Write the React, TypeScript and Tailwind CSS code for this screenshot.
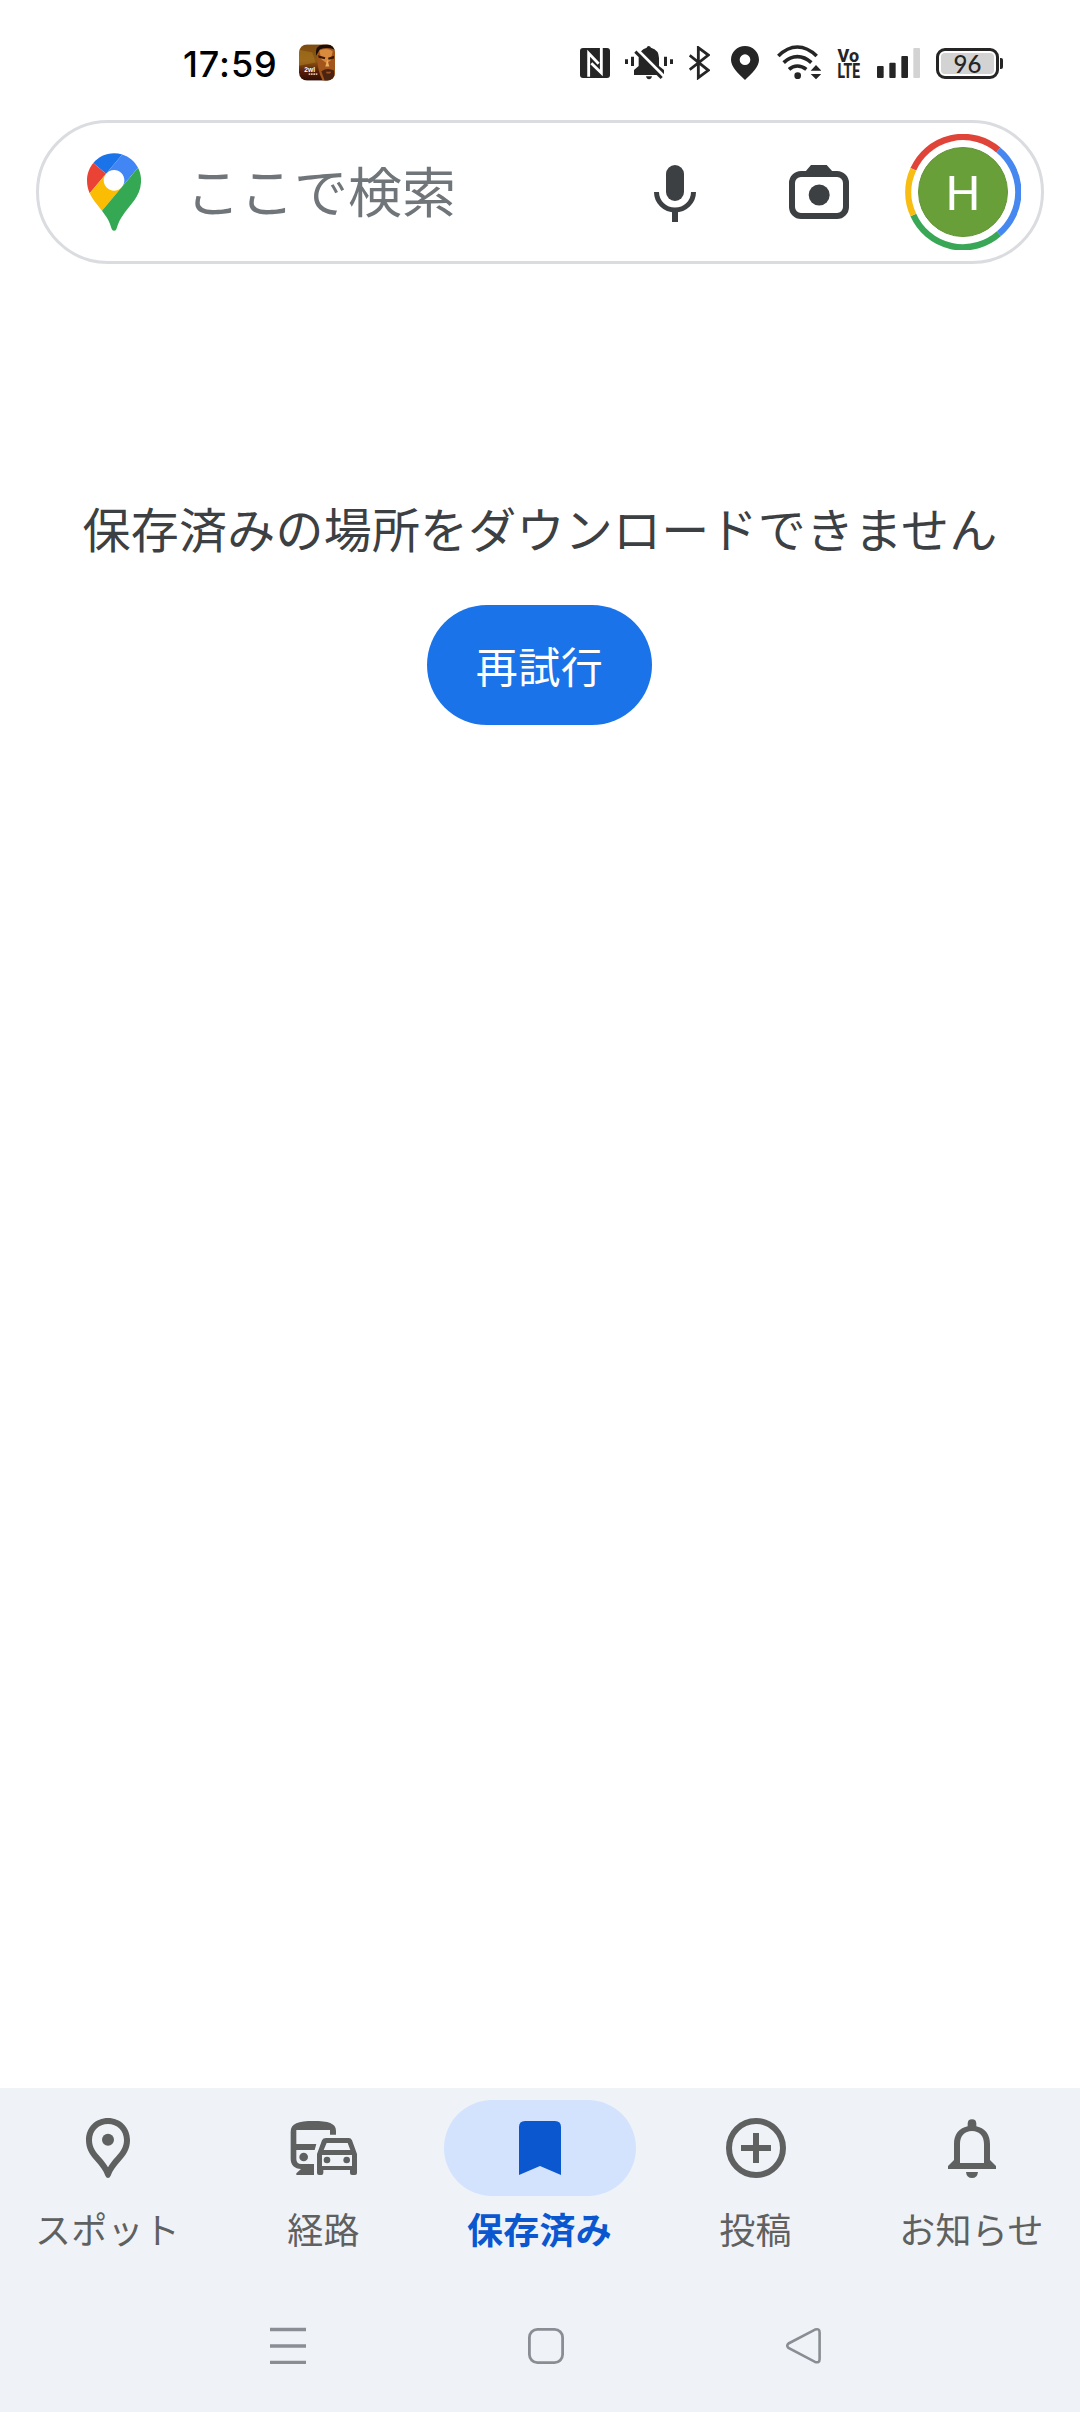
import React from "react";

const INK = "#252525";

function StatusBar() {
  return (
    <div className="flex h-[120px] items-start pt-[42px]">
      <div className="ml-[183px] flex h-[44px] w-[96px] items-center whitespace-nowrap font-['Inter'] text-[36px] leading-none font-[450] text-black">
        <span className="tracking-[0.9px]">17:59</span>
      </div>
      {/* running app thumbnail */}
      <svg className="mt-[2px] ml-[20px] h-[37px] w-[36px]" viewBox="417 43 108 110">
        <defs>
          <linearGradient id="bg" x1="0" y1="0" x2="0" y2="1">
            <stop offset="0" stopColor="#7d4a10" />
            <stop offset="0.45" stopColor="#8f5a14" />
            <stop offset="0.75" stopColor="#571c08" />
            <stop offset="1" stopColor="#2e0d05" />
          </linearGradient>
          <clipPath id="app"><rect x="417" y="44" width="108" height="108" rx="24" /></clipPath>
        </defs>
        <g clipPath="url(#app)">
          <rect x="417" y="43" width="108" height="110" fill="url(#bg)" />
          <path d="M417 60l40 8 10 30-50 10z" fill="#a87420" opacity=".6" />
          <path d="M470 60Q474 46 500 44H525V153H488Q470 120 470 60z" fill="#a3561c" />
          <path d="M478 62Q500 52 518 64L512 92 500 100 484 88z" fill="#d98a3c" />
          <path d="M468 78Q464 46 490 44H525V60Q505 50 480 58z" fill="#1c0e06" />
          <path d="M474 76l22 6-2 6-18-4zM504 84l18-6v8l-16 4z" fill="#3a1806" />
          <path d="M502 90l6 20h-12z" fill="#f0ae60" />
          <path d="M484 124Q502 112 522 122V153H494z" fill="#4a2410" />
          <path d="M498 126h16l-4 5h-10z" fill="#a0502a" />
          <text x="433" y="126" fill="#fff" fontFamily="Liberation Sans" fontWeight="700" fontSize="20">2wl</text>
          <path d="M446 133h26" stroke="#d9b8a0" strokeWidth="5" strokeDasharray="5 2" />
        </g>
      </svg>
      {/* NFC */}
      <svg className="mt-[4px] ml-[245px] h-[34px] w-[30px]" viewBox="60 48 90 102">
        <rect x="60" y="54" width="90" height="90" rx="9" fill={INK} />
        <path d="M86 140V70L116 101" fill="none" stroke="#fff" strokeWidth="8.500" />
        <path d="M124 54V129L94 100" fill="none" stroke="#fff" strokeWidth="8.500" />
      </svg>
      {/* vibrate, sound off */}
      <svg className="mt-[4px] ml-[15px] h-[34px] w-[48px]" viewBox="195 48 144 102" fill={INK}>
        <path d="M195 88h9v14h-9zM213 80h9v28h-9zM312 80h9v28h-9zM330 88h9v14h-9z" />
        <path d="M260 53Q261 48 266 48T273 53Q297 60 297 84V108L312 120V135H222V120L236 108V84Q237 60 260 53z" />
        <path d="M258 139h18q-2 9-9 9t-9-9z" />
        <path d="M233 60L312 139" stroke="#fff" strokeWidth="9" />
        <path d="M226 65L305 144" stroke={INK} strokeWidth="9" />
      </svg>
      {/* Bluetooth */}
      <svg className="mt-[4px] ml-[16px] h-[34px] w-[21px]" viewBox="387 48 63 102" fill="none" stroke={INK} strokeWidth="8.500">
        <path d="M389 76L445 121L415 143V53L445 75L389 119" />
      </svg>
      {/* location */}
      <svg className="mt-[4px] ml-[21px] h-[34px] w-[28px]" viewBox="513 48 84 102" fill={INK}>
        <path fillRule="evenodd" d="M555 48C532 48 513 66 513 89C513 110 532 127 555 150C578 127 597 110 597 89C597 66 578 48 555 48zM555 73a16 16 0 1 1 0 32a16 16 0 1 1 0-32z" />
      </svg>
      {/* Wi-Fi */}
      <svg className="mt-[3px] ml-[18px] h-[35px] w-[44px]" viewBox="51 44 132 105" fill="none" stroke={INK} strokeWidth="11">
        <path d="M55 77Q82 50 112 50T170 77M71 97Q90 79 112 79T154 97M87 117Q98 107 112 107T139 117" />
        <circle cx="113" cy="136" r="10" fill={INK} stroke="none" />
        <path d="M152 121L168 104L184 121zM152 131H184L168 147z" fill={INK} stroke="none" />
      </svg>
      {/* VoLTE */}
      <svg className="mt-[4px] ml-[16px] h-[34px] w-[24px]" viewBox="0 0 24 34" fill={INK} fontFamily="Roboto" fontWeight="800">
        <text x="0.500" y="15.500" fontSize="19" textLength="21.500" lengthAdjust="spacingAndGlyphs">Vo</text>
        <text x="0.500" y="32" fontSize="19.500" textLength="22.500" lengthAdjust="spacingAndGlyphs">LTE</text>
      </svg>
      {/* signal strength */}
      <svg className="mt-[4px] ml-[16px] h-[34px] w-[43px]" viewBox="351 48 129 102" fill={INK}>
        <rect x="351" y="108" width="20" height="36" rx="3" />
        <rect x="388" y="98" width="19" height="46" rx="3" />
        <rect x="424" y="78" width="20" height="66" rx="3" />
        <rect x="460" y="54" width="20" height="90" rx="3" fill="#d3d3d3" />
      </svg>
      {/* battery */}
      <div className="mt-[6px] ml-[16px] flex items-center">
        <div className="flex h-[31px] w-[63px] rounded-[9px] border-[3px] border-[#252525] p-[2px]">
          <div className="flex flex-1 items-center justify-center rounded-[4px] bg-[#d3d3d3] font-['Lato'] text-[24px] leading-none font-medium text-[#252525]">96</div>
        </div>
        <div className="ml-[1px] h-[11px] w-[3px] rounded-r-[2px] bg-[#252525]" />
      </div>
    </div>
  );
}

function SearchBar() {
  return (
    <div className="mx-[36px] flex h-[144px] items-center rounded-full border-[3px] border-[#dadce0] bg-white">
      <svg className="ml-[48px] h-[78px] w-[54px]" viewBox="0 0 92.3 132.3">
        <path fill="#1a73e8" d="M60.2 2.2C55.8.8 51 0 46.1 0 32 0 19.3 6.4 10.8 16.5l21.8 18.3L60.2 2.2z" />
        <path fill="#ea4335" d="M10.8 16.5C4.1 24.5 0 34.9 0 46.1c0 8.7 1.7 15.7 4.6 22l28-33.3-21.8-18.3z" />
        <path fill="#4285f4" d="M46.2 28.5c9.8 0 17.7 7.9 17.7 17.7 0 4.3-1.6 8.3-4.2 11.4 0 0 13.9-16.6 27.5-32.7-5.6-10.8-15.3-19-27-22.7L32.6 34.8c3.3-3.8 8.1-6.3 13.6-6.3" />
        <path fill="#fbbc04" d="M46.2 63.8c-9.8 0-17.7-7.9-17.7-17.7 0-4.3 1.5-8.3 4.1-11.3l-28 33.3c4.8 10.6 12.8 19.2 21 29.9l34.1-40.5c-3.3 3.9-8.1 6.3-13.5 6.3" />
        <path fill="#34a853" d="M59.1 109.2c15.4-24.1 33.3-35 33.3-63 0-7.7-1.9-14.9-5.2-21.3L25.6 98c2.6 3.4 5.3 7.3 7.9 11.3 9.4 14.5 6.8 23.1 12.8 23.1s3.4-8.7 12.8-23.2" />
      </svg>
      <div className="mb-[5px] ml-[45px] w-[453px] text-[54px] leading-[72px] whitespace-nowrap text-[#70757a]">ここで検索</div>
      <svg className="h-[72px] w-[72px]" viewBox="57 138 216 216" fill="#3c4043">
        <rect x="138" y="165" width="54" height="108" rx="27" />
        <path d="M109.500 246A55.500 54 0 0 0 220.500 246" fill="none" stroke="#3c4043" strokeWidth="15" />
        <path d="M156 300h18v36h-18z" />
      </svg>
      <svg className="ml-[72px] h-[72px] w-[72px]" viewBox="489 138 216 216" fill="#3c4043">
        <path d="M557 184L573 165H620L637 184z" />
        <rect x="516" y="192" width="162" height="126" rx="27" fill="none" stroke="#3c4043" strokeWidth="18" />
        <circle cx="597.500" cy="255" r="31.500" />
      </svg>
      <div className="ml-[50px] grid h-[116px] w-[116px] place-items-center">
        <svg className="col-start-1 row-start-1 h-[116px] w-[116px]" viewBox="855 72 348 348" fill="none" strokeWidth="19">
          <path d="M880 178A163 163 0 0 1 1135 120" stroke="#e04438" />
          <path d="M1135 120A163 163 0 0 1 1137 371" stroke="#4788f0" />
          <path d="M1137 371A163 163 0 0 1 880 315" stroke="#3aa757" />
          <path d="M880 315A163 163 0 0 1 880 178" stroke="#f7bd13" />
        </svg>
        <div className="col-start-1 row-start-1 flex h-[90px] w-[90px] items-center justify-center rounded-full border border-[#639437] bg-[#689f38] pt-[2px] font-['Roboto'] text-[49px] leading-none text-white">H</div>
      </div>
    </div>
  );
}

const GREY = "#5f6060";

function PlaceIcon() {
  return (
    <svg className="h-[72px] w-[72px]" viewBox="216 126 216 216">
      <path fill={GREY} fillRule="evenodd" d="M324 144C287 144 258 172 258 210C258 238 270 254 286 272C301 289 311 301 316 317Q319 324 324 324T332 317C337 301 347 289 362 272C378 254 390 238 390 210C390 172 361 144 324 144zM324 162C351 162 372 182 372 210C372 231 362 245 348 260C337 272 330 281 324 292C318 281 311 272 300 260C286 245 276 231 276 210C276 182 297 162 324 162z" />
      <circle cx="324" cy="209.500" r="18" fill={GREY} />
    </svg>
  );
}

function CommuteIcon() {
  return (
    <svg className="h-[72px] w-[72px]" viewBox="864 126 216 216" fill={GREY}>
      <path fillRule="evenodd" d="M872 186C872 160 895 153 940 153S1008 160 1008 182V194H990V180H889V222H949L944 240H889V268Q889 282 904 282H942V315H889V310L903 297C884 295 872 286 872 266z" />
      <circle cx="911" cy="261" r="13" />
      <path fillRule="evenodd" d="M978 204H1046Q1053 204 1056 211L1071 252V309Q1071 315 1065 315H1056Q1050 315 1050 309V300H970V309Q970 315 964 315H957Q951 315 951 309V252L966 211Q969 204 978 204zM980 219L971 240H1051L1043 219zM966 255V288H1056V255z" />
      <circle cx="981" cy="270" r="10" />
      <circle cx="1040" cy="270" r="10" />
    </svg>
  );
}

function BookmarkIcon() {
  return (
    <svg className="h-[72px] w-[72px]" viewBox="312 126 216 216">
      <path fill="#0b57d0" d="M375 153H465Q483 153 483 171V315L420 288L357 315V171Q357 153 375 153z" />
    </svg>
  );
}

function AddIcon() {
  return (
    <svg className="h-[72px] w-[72px]" viewBox="120 126 216 216" fill="none" stroke={GREY} strokeWidth="18">
      <circle cx="228" cy="234" r="81" />
      <path d="M228 189V279M183 234H273" />
    </svg>
  );
}

function BellIcon() {
  return (
    <svg className="h-[72px] w-[72px]" viewBox="768 126 216 216" fill={GREY}>
      <path fillRule="evenodd" d="M863 161Q863 148 876 148T889 161V169C916 175 930 194 930 222V270L948 288V297H804V288L822 270V222C822 194 836 175 863 169zM876 183C854 183 840 198 840 222V279H912V222C912 198 898 183 876 183z" />
      <path d="M858 306H894Q892 324 876 324T858 306z" />
    </svg>
  );
}

const tabs = [
  { label: "スポット", icon: <PlaceIcon /> },
  { label: "経路", icon: <CommuteIcon /> },
  { label: "保存済み", icon: <BookmarkIcon />, active: true },
  { label: "投稿", icon: <AddIcon /> },
  { label: "お知らせ", icon: <BellIcon /> },
];

export default function App() {
  return (
    <div className="flex h-[2412px] w-[1080px] flex-col overflow-hidden bg-white font-['Noto_Sans_CJK_JP',sans-serif]" lang="ja">
      <StatusBar />
      <SearchBar />
      <main className="flex flex-1 flex-col items-center pt-[227px]">
        <p className="text-[48px] leading-[72px] tracking-[0.24px] whitespace-nowrap text-[#3c4043]">保存済みの場所をダウンロードできません</p>
        <button className="mt-[42px] mr-px flex h-[120px] w-[225px] items-center justify-center rounded-full bg-[#1a73e8] text-[42px] leading-[60px] tracking-[0.5px] text-white">再試行</button>
      </main>
      <footer className="h-[324px] bg-[#eff3f8]">
        <nav className="grid h-[204px] grid-cols-5 pt-[12px]">
          {tabs.map((t) => (
            <div key={t.label} className="flex flex-col items-center">
              <div className={t.active ? "flex h-[96px] w-[192px] items-center justify-center rounded-full bg-[#d3e3fd]" : "flex h-[96px] w-[192px] items-center justify-center"}>
                {t.icon}
              </div>
              <span className={t.active ? "mt-[6px] mr-px text-[36px] leading-[52px] font-bold tracking-[0.3px] whitespace-nowrap text-[#0b57d0]" : "mt-[6px] mr-px text-[36px] leading-[52px] tracking-[0.3px] whitespace-nowrap text-[#5f6060]"}>{t.label}</span>
            </div>
          ))}
        </nav>
        <div className="flex items-center pt-[32px] pl-[270px]">
          <svg className="h-[40px] w-[36px]" viewBox="0 0 36 40" stroke="#8a8e94" strokeWidth="3.300">
            <path d="M0 5.500H36M0 22H36M0 38.300H36" />
          </svg>
          <svg className="ml-[222px] h-[40px] w-[36px]" viewBox="0 0 36 40" fill="none" stroke="#8a8e94" strokeWidth="2.800">
            <rect x="1.400" y="5.400" width="33.200" height="33.200" rx="8" />
          </svg>
          <svg className="ml-[222px] h-[40px] w-[36px]" viewBox="0 0 36 40" fill="none" stroke="#8a8e94" strokeWidth="2.600">
            <path d="M2.500 19.500L29 5.600Q33.600 4 33.600 8.500V35Q33.600 39.500 29 37.900L2.500 24Q0 21.700 2.500 19.500z" />
          </svg>
        </div>
      </footer>
    </div>
  );
}
